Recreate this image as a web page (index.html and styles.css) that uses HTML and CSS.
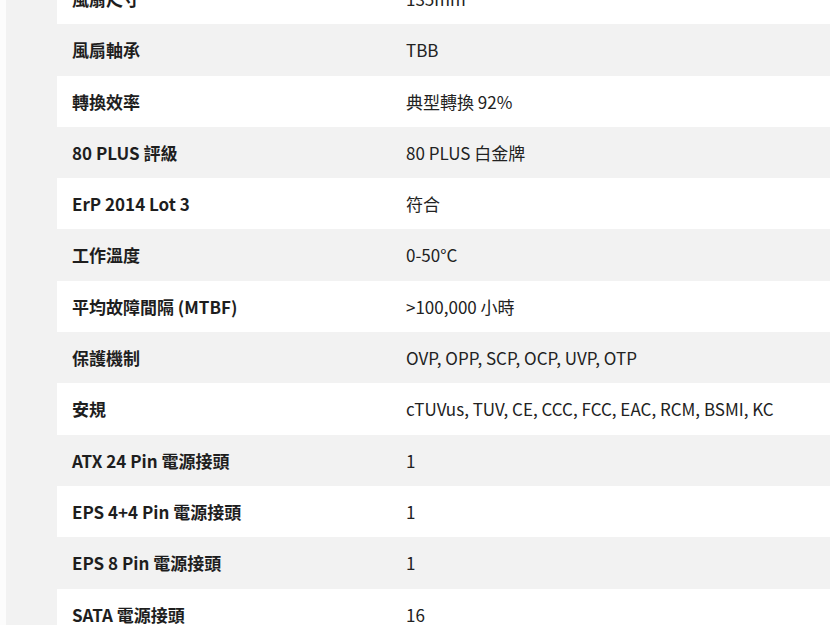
FILE: index.html
```html
<!DOCTYPE html>
<html lang="zh-Hant">
<head>
<meta charset="utf-8">
<title>規格</title>
<link rel="stylesheet" href="styles.css">
</head>
<body>
<div class="page">
  <table class="spec">
    <tbody>
      <tr><th>風扇尺寸</th><td>135mm</td></tr>
      <tr><th>風扇軸承</th><td>TBB</td></tr>
      <tr><th>轉換效率</th><td>典型轉換 92%</td></tr>
      <tr><th>80 PLUS 評級</th><td>80 PLUS 白金牌</td></tr>
      <tr><th>ErP 2014 Lot 3</th><td>符合</td></tr>
      <tr><th>工作溫度</th><td>0-50°C</td></tr>
      <tr><th>平均故障間隔 (MTBF)</th><td>&gt;100,000 小時</td></tr>
      <tr><th>保護機制</th><td>OVP, OPP, SCP, OCP, UVP, OTP</td></tr>
      <tr><th>安規</th><td>cTUVus, TUV, CE, CCC, FCC, EAC, RCM, BSMI, KC</td></tr>
      <tr><th>ATX 24 Pin 電源接頭</th><td>1</td></tr>
      <tr><th>EPS 4+4 Pin 電源接頭</th><td>1</td></tr>
      <tr><th>EPS 8 Pin 電源接頭</th><td>1</td></tr>
      <tr><th>SATA 電源接頭</th><td>16</td></tr>
    </tbody>
  </table>
</div>
</body>
</html>
```
FILE: styles.css
```css
html, body {
  margin: 0;
  padding: 0;
  background: #fcfcfc;
  overflow: hidden;
}
body {
  font-family: "Noto Sans CJK TC", "Noto Sans", sans-serif;
  color: #222;
}
.page {
  margin: -27px 0 0 6px;
  padding: 0 0 0 51px;
  background: #f2f2f2;
}
.spec {
  width: 100%;
  border-collapse: collapse;
  table-layout: fixed;
}
.spec tr:nth-child(odd) {
  background: #fff;
}
.spec th,
.spec td {
  text-align: left;
  font-size: 17px;
  line-height: 25.3px;
  padding: 13px 0;
  vertical-align: middle;
}
.spec th {
  width: 311px;
  padding-left: 15px;
  font-weight: 700;
  color: #1e1e1e;
}
.spec td {
  padding-left: 23px;
  font-weight: 400;
  color: #222;
}
```
